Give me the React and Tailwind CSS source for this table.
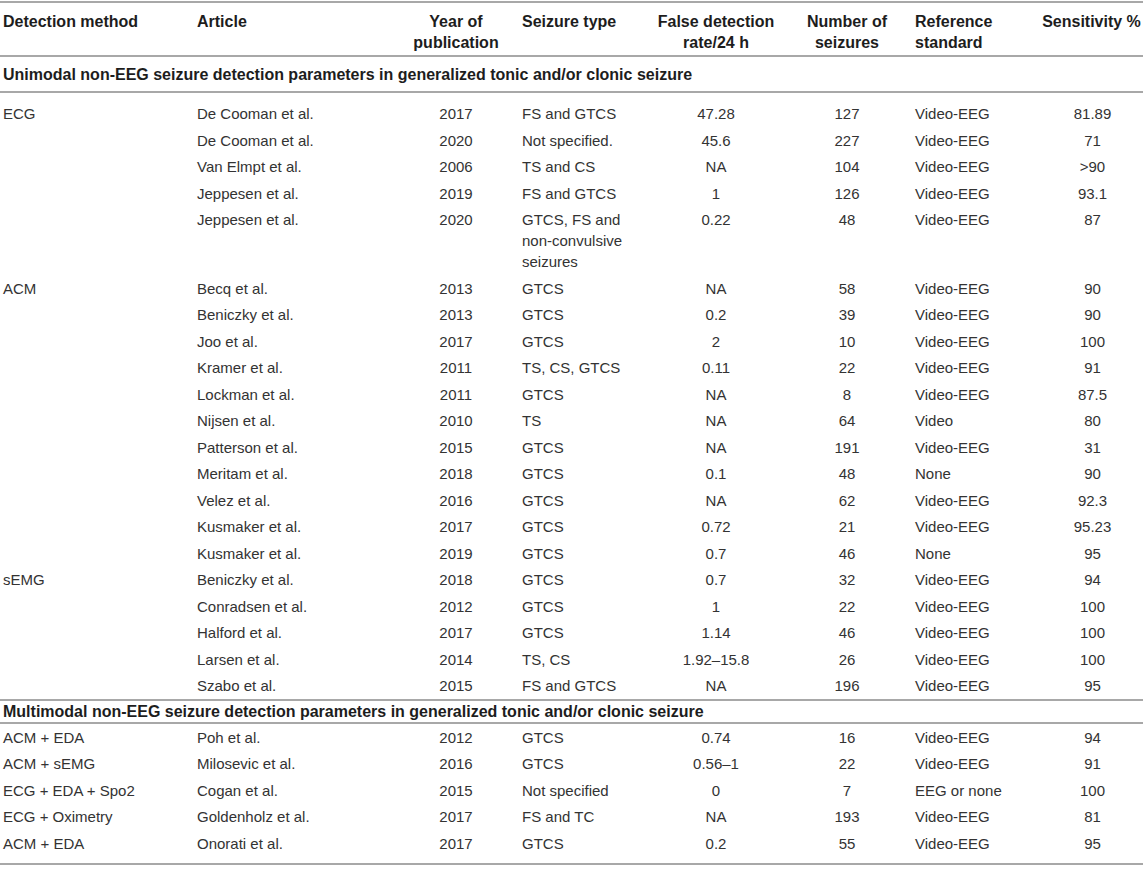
import React from 'react';

const cols = 'grid grid-cols-[194px_198px_128px_130px_132px_130px_128px_103px]';

const unimodal = [
  ['ECG', 'De Cooman et al.', '2017', 'FS and GTCS', '47.28', '127', 'Video-EEG', '81.89'],
  ['', 'De Cooman et al.', '2020', 'Not specified.', '45.6', '227', 'Video-EEG', '71'],
  ['', 'Van Elmpt et al.', '2006', 'TS and CS', 'NA', '104', 'Video-EEG', '>90'],
  ['', 'Jeppesen et al.', '2019', 'FS and GTCS', '1', '126', 'Video-EEG', '93.1'],
  ['', 'Jeppesen et al.', '2020', 'GTCS, FS and non-convulsive seizures', '0.22', '48', 'Video-EEG', '87'],
  ['ACM', 'Becq et al.', '2013', 'GTCS', 'NA', '58', 'Video-EEG', '90'],
  ['', 'Beniczky et al.', '2013', 'GTCS', '0.2', '39', 'Video-EEG', '90'],
  ['', 'Joo et al.', '2017', 'GTCS', '2', '10', 'Video-EEG', '100'],
  ['', 'Kramer et al.', '2011', 'TS, CS, GTCS', '0.11', '22', 'Video-EEG', '91'],
  ['', 'Lockman et al.', '2011', 'GTCS', 'NA', '8', 'Video-EEG', '87.5'],
  ['', 'Nijsen et al.', '2010', 'TS', 'NA', '64', 'Video', '80'],
  ['', 'Patterson et al.', '2015', 'GTCS', 'NA', '191', 'Video-EEG', '31'],
  ['', 'Meritam et al.', '2018', 'GTCS', '0.1', '48', 'None', '90'],
  ['', 'Velez et al.', '2016', 'GTCS', 'NA', '62', 'Video-EEG', '92.3'],
  ['', 'Kusmaker et al.', '2017', 'GTCS', '0.72', '21', 'Video-EEG', '95.23'],
  ['', 'Kusmaker et al.', '2019', 'GTCS', '0.7', '46', 'None', '95'],
  ['sEMG', 'Beniczky et al.', '2018', 'GTCS', '0.7', '32', 'Video-EEG', '94'],
  ['', 'Conradsen et al.', '2012', 'GTCS', '1', '22', 'Video-EEG', '100'],
  ['', 'Halford et al.', '2017', 'GTCS', '1.14', '46', 'Video-EEG', '100'],
  ['', 'Larsen et al.', '2014', 'TS, CS', '1.92–15.8', '26', 'Video-EEG', '100'],
  ['', 'Szabo et al.', '2015', 'FS and GTCS', 'NA', '196', 'Video-EEG', '95'],
];

const multimodal = [
  ['ACM + EDA', 'Poh et al.', '2012', 'GTCS', '0.74', '16', 'Video-EEG', '94'],
  ['ACM + sEMG', 'Milosevic et al.', '2016', 'GTCS', '0.56–1', '22', 'Video-EEG', '91'],
  ['ECG + EDA + Spo2', 'Cogan et al.', '2015', 'Not specified', '0', '7', 'EEG or none', '100'],
  ['ECG + Oximetry', 'Goldenholz et al.', '2017', 'FS and TC', 'NA', '193', 'Video-EEG', '81'],
  ['ACM + EDA', 'Onorati et al.', '2017', 'GTCS', '0.2', '55', 'Video-EEG', '95'],
];

function Row({ cells }) {
  return (
    <div className={`${cols} py-[2.75px]`}>
      <div className="pl-[3px]">{cells[0]}</div>
      <div className="pl-[3px]">{cells[1]}</div>
      <div className="text-center">{cells[2]}</div>
      <div className="pl-[2px] pr-[4px]">{cells[3]}</div>
      <div className="text-center">{cells[4]}</div>
      <div className="text-center">{cells[5]}</div>
      <div className="pl-[3px]">{cells[6]}</div>
      <div className="text-center pl-[2px]">{cells[7]}</div>
    </div>
  );
}

export default function App() {
  return (
    <div className="bg-white min-h-[870px] pt-[1px]">
      <div className="w-[1143px] font-['Liberation_Sans',Arial,sans-serif] text-[15px] leading-[21px] text-[#333]">
        {/* column headings */}
        <div className={`${cols} border-t-2 border-b-2 border-[#a8a8a8] pt-[7.5px] pb-[2.5px] font-bold text-[16px] text-[#1d1d1d]`}>
          <div className="pl-[3px]">Detection method</div>
          <div className="pl-[3px]">Article</div>
          <div className="text-center">Year of<br />publication</div>
          <div className="pl-[2px]">Seizure type</div>
          <div className="text-center">False detection<br />rate/24 h</div>
          <div className="text-center">Number of<br />seizures</div>
          <div className="pl-[3px]">Reference<br />standard</div>
          <div className="text-center whitespace-nowrap">Sensitivity %</div>
        </div>

        <div className="border-b-2 border-[#a8a8a8] pt-[7px] pb-[6px] pl-[3px] font-bold text-[16px] text-[#1d1d1d]">
          Unimodal non-EEG seizure detection parameters in generalized tonic and/or clonic seizure
        </div>

        <div className="pt-[7.5px]">
          {unimodal.map((r, i) => <Row key={i} cells={r} />)}
        </div>

        <div className="border-t-2 border-b-2 border-[#a8a8a8] pl-[3px] font-bold text-[16px] text-[#1d1d1d]">
          Multimodal non-EEG seizure detection parameters in generalized tonic and/or clonic seizure
        </div>

        <div className="pb-[6.5px] border-b-2 border-[#a8a8a8]">
          {multimodal.map((r, i) => <Row key={i} cells={r} />)}
        </div>
      </div>
    </div>
  );
}
